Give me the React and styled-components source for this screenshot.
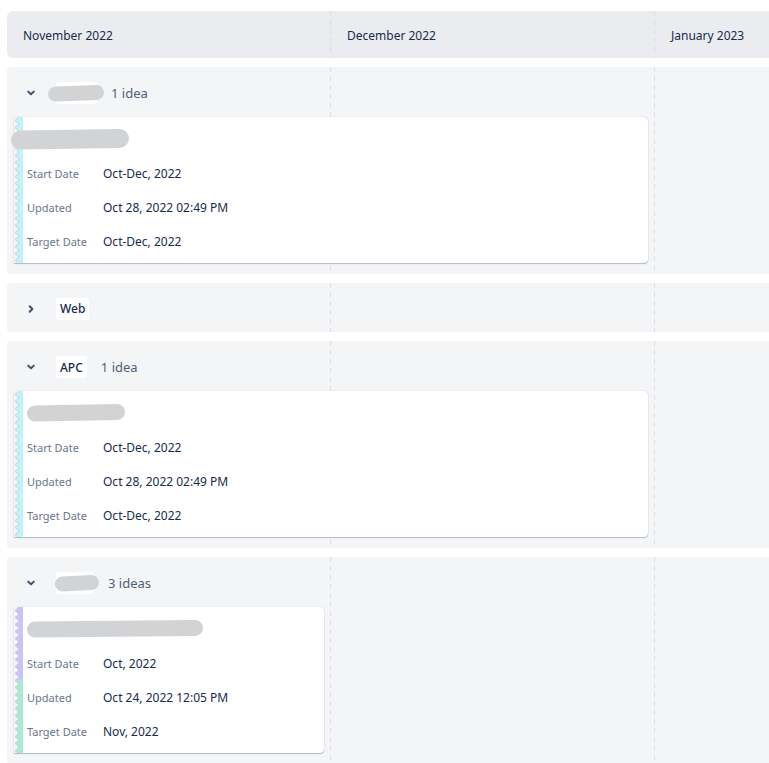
import React from 'react';
import styled, { createGlobalStyle } from 'styled-components';

const GlobalStyle = createGlobalStyle`
  html, body {
    margin: 0;
    padding: 0;
    background: #ffffff;
    overflow: hidden;
  }
  body {
    font-family: "Noto Sans", "Open Sans", Arial, sans-serif;
    color: #172b4d;
  }
`;

const COL = 324;

const months = ['November 2022', 'December 2022', 'January 2023'];

const groups = [
  {
    id: 'g1',
    open: true,
    chip: { smudge: 58, width: 41, offset: -13 },
    count: '1 idea',
    cards: [
      {
        span: 2,
        title: { width: 120, thick: 19, offset: -17 },
        bar: [{ color: '#bff3f8', frac: 1 }],
        rows: [
          ['Start Date', 'Oct-Dec, 2022'],
          ['Updated', 'Oct 28, 2022 02:49 PM'],
          ['Target Date', 'Oct-Dec, 2022'],
        ],
      },
    ],
  },
  { id: 'g2', open: false, label: 'Web', cards: [] },
  {
    id: 'g3',
    open: true,
    label: 'APC',
    count: '1 idea',
    cards: [
      {
        span: 2,
        title: { width: 100, thick: 16, offset: -1 },
        bar: [{ color: '#bff3f8', frac: 1 }],
        rows: [
          ['Start Date', 'Oct-Dec, 2022'],
          ['Updated', 'Oct 28, 2022 02:49 PM'],
          ['Target Date', 'Oct-Dec, 2022'],
        ],
      },
    ],
  },
  {
    id: 'g4',
    open: true,
    chip: { smudge: 46, width: 38, offset: -6 },
    count: '3 ideas',
    cards: [
      {
        span: 1,
        title: { width: 178, thick: 16, offset: -1 },
        bar: [
          { color: '#cbc3f7', frac: 0.5 },
          { color: '#a6ebd2', frac: 0.5 },
        ],
        rows: [
          ['Start Date', 'Oct, 2022'],
          ['Updated', 'Oct 24, 2022 12:05 PM'],
          ['Target Date', 'Nov, 2022'],
        ],
      },
    ],
  },
];

const Page = styled.div`
  padding: 11px 0 0 7px;
  width: 769px;
  height: 763px;
  box-sizing: border-box;
  overflow: hidden;
`;

const Timeline = styled.div`
  width: ${COL * 3}px;
  display: flex;
  flex-direction: column;
  gap: 9px;
`;

const dashed = `
  background-image:
    repeating-linear-gradient(to bottom, #dcdfe4 0 5px, transparent 5px 9px),
    repeating-linear-gradient(to bottom, #dcdfe4 0 5px, transparent 5px 9px);
  background-size: 1px 100%, 1px 100%;
  background-position: ${COL - 1}px 0, ${COL * 2 - 1}px 0;
  background-repeat: no-repeat;
`;

const HeaderBand = styled.div`
  display: grid;
  grid-template-columns: repeat(3, ${COL}px);
  height: 47px;
  border-radius: 6px 0 0 6px;
  background-color: #ebecf0;
  ${dashed}
`;

const HeaderCell = styled.div`
  display: flex;
  align-items: center;
  padding: 2px 0 0 16px;
  font-size: 12px;
  font-weight: 400;
  color: #172b4d;
`;

const GroupBand = styled.div`
  border-radius: 4px 0 0 4px;
  background-color: #f4f5f7;
  ${dashed}
  padding-bottom: ${(p) => (p.$open ? 11 : 0)}px;
`;

const GroupHeader = styled.div`
  height: ${(p) => (p.$open ? 50 : 49)}px;
  display: flex;
  align-items: center;
  padding: 2px 0 0 19px;
  box-sizing: border-box;
`;

const Toggle = styled.span`
  width: 10px;
  height: 10px;
  display: flex;
  margin-right: 20px;
  color: #42526e;
`;

const Chip = styled.span`
  display: inline-flex;
  align-items: center;
  height: 22px;
  width: ${(p) => (p.$width ? `${p.$width}px` : 'auto')};
  padding: 0 4px;
  box-sizing: border-box;
  border-radius: 3px;
  background: #ffffff;
  font-size: 12px;
  font-weight: 500;
  color: #172b4d;
`;

const Count = styled.span`
  margin-left: 14px;
  font-size: 13px;
  color: #505f79;
`;

const Smudge = styled.svg`
  display: block;
  flex-shrink: 0;
  margin-left: ${(p) => p.$offset || 0}px;
`;

const CardGrid = styled.div`
  display: grid;
  grid-template-columns: repeat(3, ${COL}px);
`;

const Card = styled.div`
  grid-column: span ${(p) => p.$span};
  margin: 0 7px 0 7px;
  height: 146px;
  display: flex;
  background: #ffffff;
  border-radius: 0 4px 4px 0;
  box-shadow: 0 1px 1px rgba(9, 30, 66, 0.25), 0 0 1px rgba(9, 30, 66, 0.31);
`;

const Bar = styled.svg`
  display: block;
  flex-shrink: 0;
  width: 9px;
  height: 100%;
  background: #f4f5f7;
`;

const CardBody = styled.div`
  flex: 1;
  padding: 11px 12px 0 4px;
  display: flex;
  flex-direction: column;
`;

const TitleRow = styled.div`
  height: 22px;
  display: flex;
  align-items: center;
  margin-bottom: 6px;
`;

const Row = styled.div`
  height: 34px;
  display: grid;
  grid-template-columns: 76px 1fr;
  align-items: center;
`;

const Label = styled.span`
  font-size: 11px;
  color: #6b778c;
`;

const Value = styled.span`
  font-size: 12px;
  color: #172b4d;
`;

const Chevron = ({ open }) => (
  <svg width="10" height="10" viewBox="0 0 10 10" fill="none">
    <path
      d={open ? 'M2.2 3.6 L5 6.3 L7.8 3.6' : 'M3.7 2.2 L6.4 5 L3.7 7.8'}
      stroke="currentColor"
      strokeWidth="2"
      strokeLinecap="round"
      strokeLinejoin="round"
    />
  </svg>
);

const Blot = ({ width, thick, offset }) => (
  <Smudge $offset={offset} width={width} height={thick + 2} viewBox={`0 0 ${width} ${thick + 2}`}>
    <path
      d={`M${thick / 2 + 1} ${thick / 2 + 1.5} L${width - thick / 2 - 1} ${thick / 2}`}
      stroke="#d2d3d5"
      strokeWidth={thick}
      strokeLinecap="round"
    />
  </Smudge>
);

// left edge of a card: a band of teeth pointing left, in the card's colour(s)
const Zigzag = ({ id, segments }) => {
  let y = 0;
  return (
    <Bar>
      <defs>
        {segments.map((s, i) => (
          <pattern key={i} id={`${id}-p${i}`} width="9" height="7" patternUnits="userSpaceOnUse">
            <path d="M5 0 L9 0 L9 7 L5 7 L1 3.5 Z" fill={s.color} />
            <path d="M5 0 L1 3.5 L5 7" stroke="#c3c8d2" strokeWidth="0.8" fill="none" />
          </pattern>
        ))}
      </defs>
      {segments.map((s, i) => {
        const rect = (
          <rect
            key={i}
            x="0"
            y={`${y * 100}%`}
            width="9"
            height={`${s.frac * 100}%`}
            fill={`url(#${id}-p${i})`}
          />
        );
        y += s.frac;
        return rect;
      })}
    </Bar>
  );
};

const IdeaCard = ({ id, card }) => (
  <Card $span={card.span}>
    <Zigzag id={id} segments={card.bar} />
    <CardBody>
      <TitleRow>
        <Blot {...card.title} />
      </TitleRow>
      {card.rows.map(([label, value]) => (
        <Row key={label}>
          <Label>{label}</Label>
          <Value>{value}</Value>
        </Row>
      ))}
    </CardBody>
  </Card>
);

const Group = ({ group }) => (
  <GroupBand $open={group.open}>
    <GroupHeader $open={group.open}>
      <Toggle>
        <Chevron open={group.open} />
      </Toggle>
      {group.label ? (
        <Chip>{group.label}</Chip>
      ) : (
        <Chip $width={group.chip.width}>
          <Blot width={group.chip.smudge} thick={15} offset={group.chip.offset} />
        </Chip>
      )}
      {group.count && <Count>{group.count}</Count>}
    </GroupHeader>
    {group.open && (
      <CardGrid>
        {group.cards.map((card, i) => (
          <IdeaCard key={i} id={`${group.id}-c${i}`} card={card} />
        ))}
      </CardGrid>
    )}
  </GroupBand>
);

export default function App() {
  return (
    <Page>
      <GlobalStyle />
      <Timeline>
        <HeaderBand>
          {months.map((m) => (
            <HeaderCell key={m}>{m}</HeaderCell>
          ))}
        </HeaderBand>
        {groups.map((g) => (
          <Group key={g.id} group={g} />
        ))}
      </Timeline>
    </Page>
  );
}
